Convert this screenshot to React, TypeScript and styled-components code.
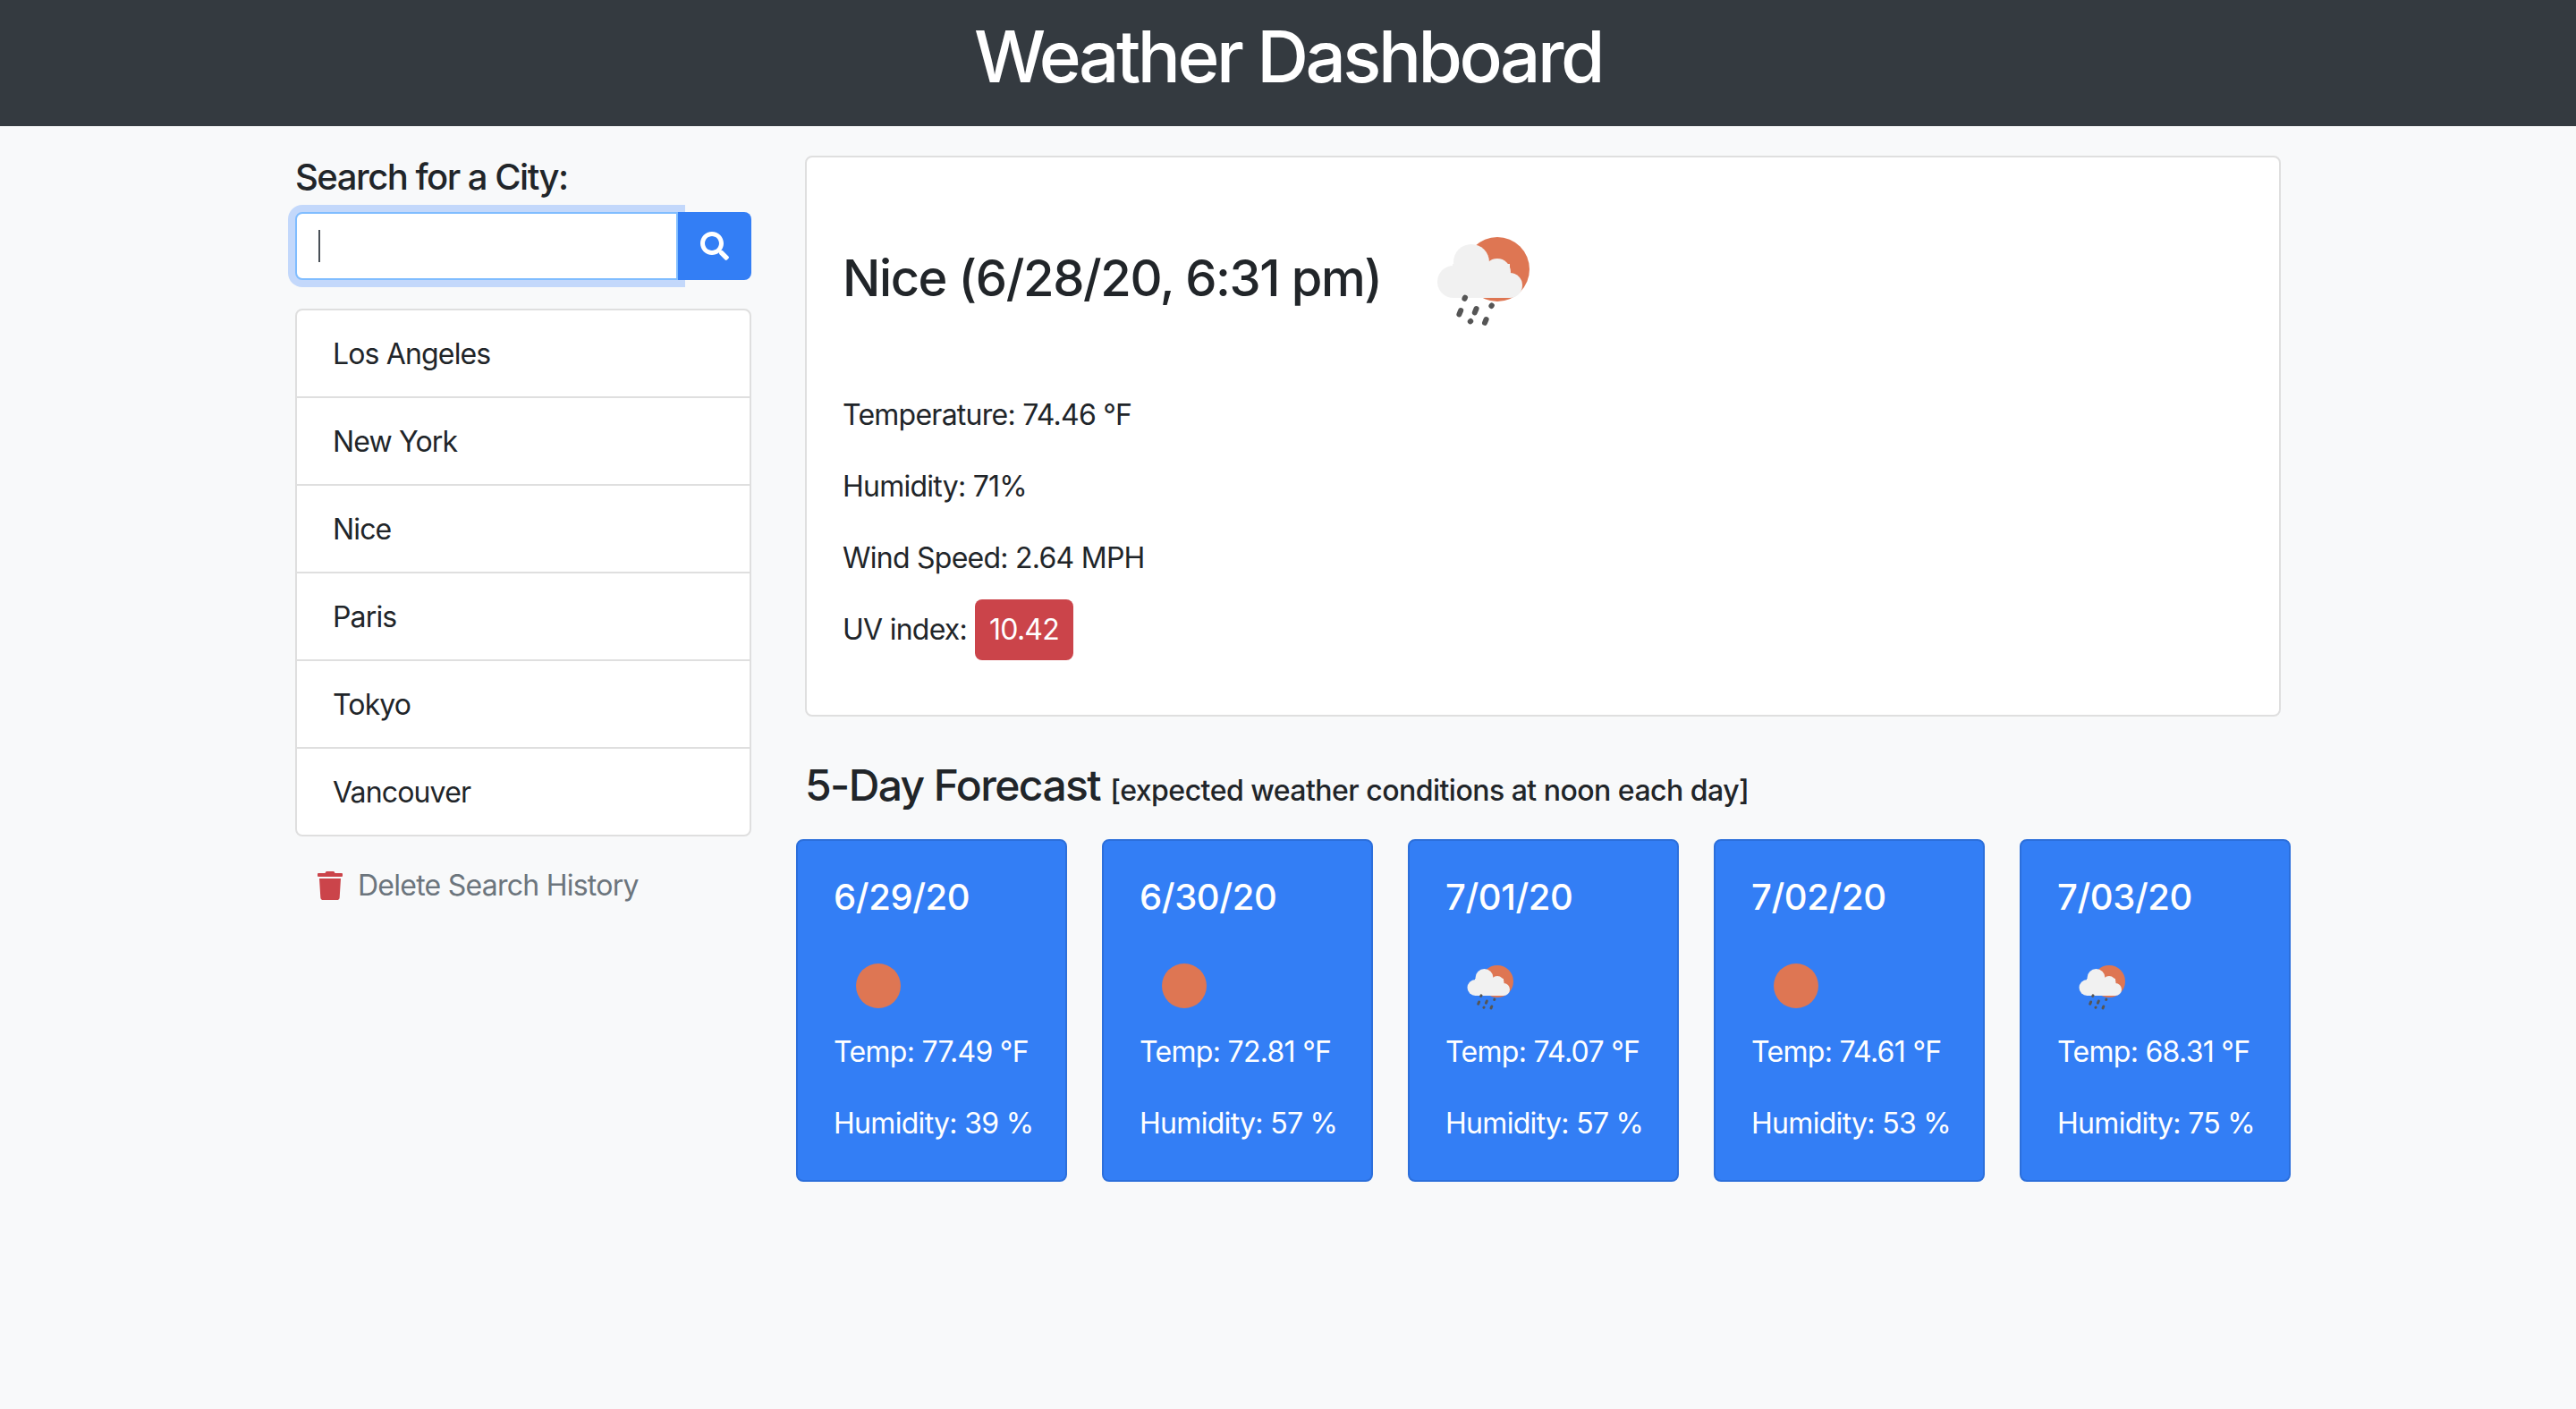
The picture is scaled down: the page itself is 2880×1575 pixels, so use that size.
import styled, { createGlobalStyle } from "styled-components";
import { FaSearch, FaTrash } from "react-icons/fa";

const GlobalStyle = createGlobalStyle`
	html, body {
		margin: 0;
		padding: 0;
		background: #f8f9fa;
	}
	body {
		font-family: "Inter", "Liberation Sans", sans-serif;
		font-size: 32px;
		line-height: 48px;
		letter-spacing: -0.75px;
		color: #212529;
	}
	* {
		box-sizing: border-box;
	}
`;

const cities = ["Los Angeles", "New York", "Nice", "Paris", "Tokyo", "Vancouver"];

const forecast = [
	{ date: "6/29/20", temp: "77.49", humidity: 39, rainy: false },
	{ date: "6/30/20", temp: "72.81", humidity: 57, rainy: false },
	{ date: "7/01/20", temp: "74.07", humidity: 57, rainy: true },
	{ date: "7/02/20", temp: "74.61", humidity: 53, rainy: false },
	{ date: "7/03/20", temp: "68.31", humidity: 75, rainy: true },
];

const RainIcon = ({ size }: { size: number }) => (
	<svg width={size} height={size} viewBox="0 0 100 100">
		<circle cx="58" cy="45" r="18" fill="#de7653" />
		<g fill="#f1f1f1">
			<circle cx="43.5" cy="41" r="10" />
			<circle cx="33.5" cy="52" r="9" />
			<circle cx="58" cy="46.5" r="7.5" />
			<circle cx="65" cy="54" r="7" />
			<rect x="33" y="42" width="32" height="19" />
		</g>
		<g stroke="#555" strokeWidth="3" strokeLinecap="round">
			<path d="M40 60.8l-.3.6" />
			<path d="M37.6 68l-.9 2.2" />
			<path d="M46.3 67l-.9 2.2" />
			<path d="M54.9 65.2l-.2.3" />
			<path d="M43.1 74l-.2.2" />
			<path d="M51.8 73l-.8 1.9" />
		</g>
	</svg>
);

const SunIcon = () => (
	<svg width="100" height="100" viewBox="0 0 100 100">
		<circle cx="50" cy="50" r="25" fill="#de7653" />
	</svg>
);

export default function App() {
	return (
		<>
			<GlobalStyle />
			<Header>
				<Title>Weather Dashboard</Title>
			</Header>
			<Content>
				<Sidebar>
					<SearchLabel>Search for a City:</SearchLabel>
					<SearchGroup>
						<InputWrap>
							<SearchInput type="text" />
							<Caret />
						</InputWrap>
						<SearchButton type="button">
							<FaSearch size={32} />
						</SearchButton>
					</SearchGroup>
					<CityList>
						{cities.map((city) => (
							<CityItem key={city}>{city}</CityItem>
						))}
					</CityList>
					<DeleteButton type="button">
						<TrashIcon />
						Delete Search History
					</DeleteButton>
				</Sidebar>
				<Main>
					<CurrentCard>
						<CurrentHead>
							<CityTitle>Nice (6/28/20, 6:31 pm)</CityTitle>
							<RainIcon size={200} />
						</CurrentHead>
						<Stat>Temperature: 74.46 °F</Stat>
						<Stat>Humidity: 71%</Stat>
						<Stat>Wind Speed: 2.64 MPH</Stat>
						<Stat>
							UV index:<UvBadge>10.42</UvBadge>
						</Stat>
					</CurrentCard>
					<ForecastHeading>
						5-Day Forecast <small>[expected weather conditions at noon each day]</small>
					</ForecastHeading>
					<ForecastRow>
						{forecast.map((day) => (
							<DayCard key={day.date}>
								<DayDate>{day.date}</DayDate>
								{day.rainy ? <RainIcon size={100} /> : <SunIcon />}
								<DayLine>Temp: {day.temp} °F</DayLine>
								<DayLine>Humidity: {day.humidity} %</DayLine>
							</DayCard>
						))}
					</ForecastRow>
				</Main>
			</Content>
		</>
	);
}

const Header = styled.header`
	height: 141px;
	background: #343a40;
	color: #fff;
	display: flex;
	justify-content: center;
`;

const Title = styled.h1`
	margin: 6px 0 0;
	font-size: 80px;
	line-height: 114px;
	font-weight: 500;
	letter-spacing: -3.5px;
`;

const Content = styled.div`
	display: flex;
	align-items: flex-start;
	gap: 60px;
	padding: 33px 0 0 330px;
	min-height: 1434px;
`;

const Sidebar = styled.aside`
	width: 510px;
	display: flex;
	flex-direction: column;
`;

const SearchLabel = styled.label`
	font-size: 40px;
	line-height: 48px;
	font-weight: 500;
	letter-spacing: -1.5px;
	margin-bottom: 15px;
`;

const SearchGroup = styled.div`
	display: flex;
	height: 76px;
	margin-bottom: 32px;
`;

const InputWrap = styled.div`
	position: relative;
	flex: 1;
`;

const SearchInput = styled.input`
	width: 100%;
	height: 100%;
	display: block;
	border: 2px solid #80bdff;
	border-radius: 8px 0 0 8px;
	box-shadow: 0 0 0 8px #c3d8fb;
	outline: none;
	background: #fff;
	padding: 0 24px;
`;

const Caret = styled.span`
	position: absolute;
	left: 26px;
	top: 20px;
	width: 2px;
	height: 36px;
	background: #495057;
`;

const SearchButton = styled.button`
	position: relative;
	z-index: 1;
	width: 82px;
	border: none;
	border-radius: 0 8px 8px 0;
	background: #337ef5;
	color: #fff;
	display: flex;
	align-items: center;
	justify-content: center;
	padding: 0;
`;

const CityList = styled.ul`
	list-style: none;
	margin: 0;
	padding: 0;
	border: 2px solid #dfdfdf;
	border-radius: 8px;
	background: #fff;
`;

const CityItem = styled.li`
	height: 98px;
	padding: 2px 40px 0;
	display: flex;
	align-items: center;
	border-bottom: 2px solid #dfdfdf;
	letter-spacing: -0.85px;

	&:last-child {
		height: 96px;
		border-bottom: none;
	}
`;

const DeleteButton = styled.button`
	margin-top: 31px;
	height: 48px;
	padding: 0 0 0 25px;
	border: none;
	background: transparent;
	color: #6c757d;
	font: inherit;
	letter-spacing: inherit;
	display: flex;
	align-items: center;
	gap: 17px;
`;

const TrashIcon = styled(FaTrash)`
	width: 28px;
	height: 32px;
	color: #cb444a;
`;

const Main = styled.main`
	width: 1650px;
	display: flex;
	flex-direction: column;
`;

const CurrentCard = styled.section`
	height: 627px;
	background: #fff;
	border: 2px solid #dfdfdf;
	border-radius: 8px;
	padding: 35px 40px 0;
`;

const CurrentHead = styled.div`
	display: flex;
	align-items: center;
	gap: 13px;
	margin-bottom: 29px;
`;

const CityTitle = styled.h2`
	margin: 0;
	font-size: 56px;
	line-height: 66px;
	font-weight: 500;
	letter-spacing: -1.4px;
`;

const Stat = styled.p`
	margin: 0 0 32px;
	height: 48px;
	display: flex;
	align-items: center;
`;

const UvBadge = styled.span`
	margin-left: 9px;
	width: 110px;
	height: 68px;
	flex-shrink: 0;
	border-radius: 8px;
	background: #cb444a;
	color: #fff;
	display: flex;
	align-items: center;
	justify-content: center;
`;

const ForecastHeading = styled.h3`
	margin: 48px 0 25px;
	font-size: 48px;
	line-height: 58px;
	font-weight: 500;
	letter-spacing: -1.6px;

	small {
		font-size: 32px;
		font-weight: 500;
		letter-spacing: -0.52px;
	}
`;

const ForecastRow = styled.div`
	display: grid;
	grid-template-columns: repeat(5, 303px);
	column-gap: 39px;
	margin-left: -10px;
`;

const DayCard = styled.article`
	height: 383px;
	padding: 39px 40px 0;
	background: #337ef5;
	border: 2px solid #2c6fdb;
	border-radius: 8px;
	color: #fff;
	display: flex;
	flex-direction: column;
	letter-spacing: -0.7px;

	svg {
		display: block;
		margin-top: 25px;
		flex-shrink: 0;
	}
`;

const DayDate = styled.div`
	font-size: 40px;
	line-height: 48px;
	font-weight: 500;
	letter-spacing: -0.4px;
`;

const DayLine = styled.p`
	margin: 0 0 32px;
	white-space: nowrap;
`;
